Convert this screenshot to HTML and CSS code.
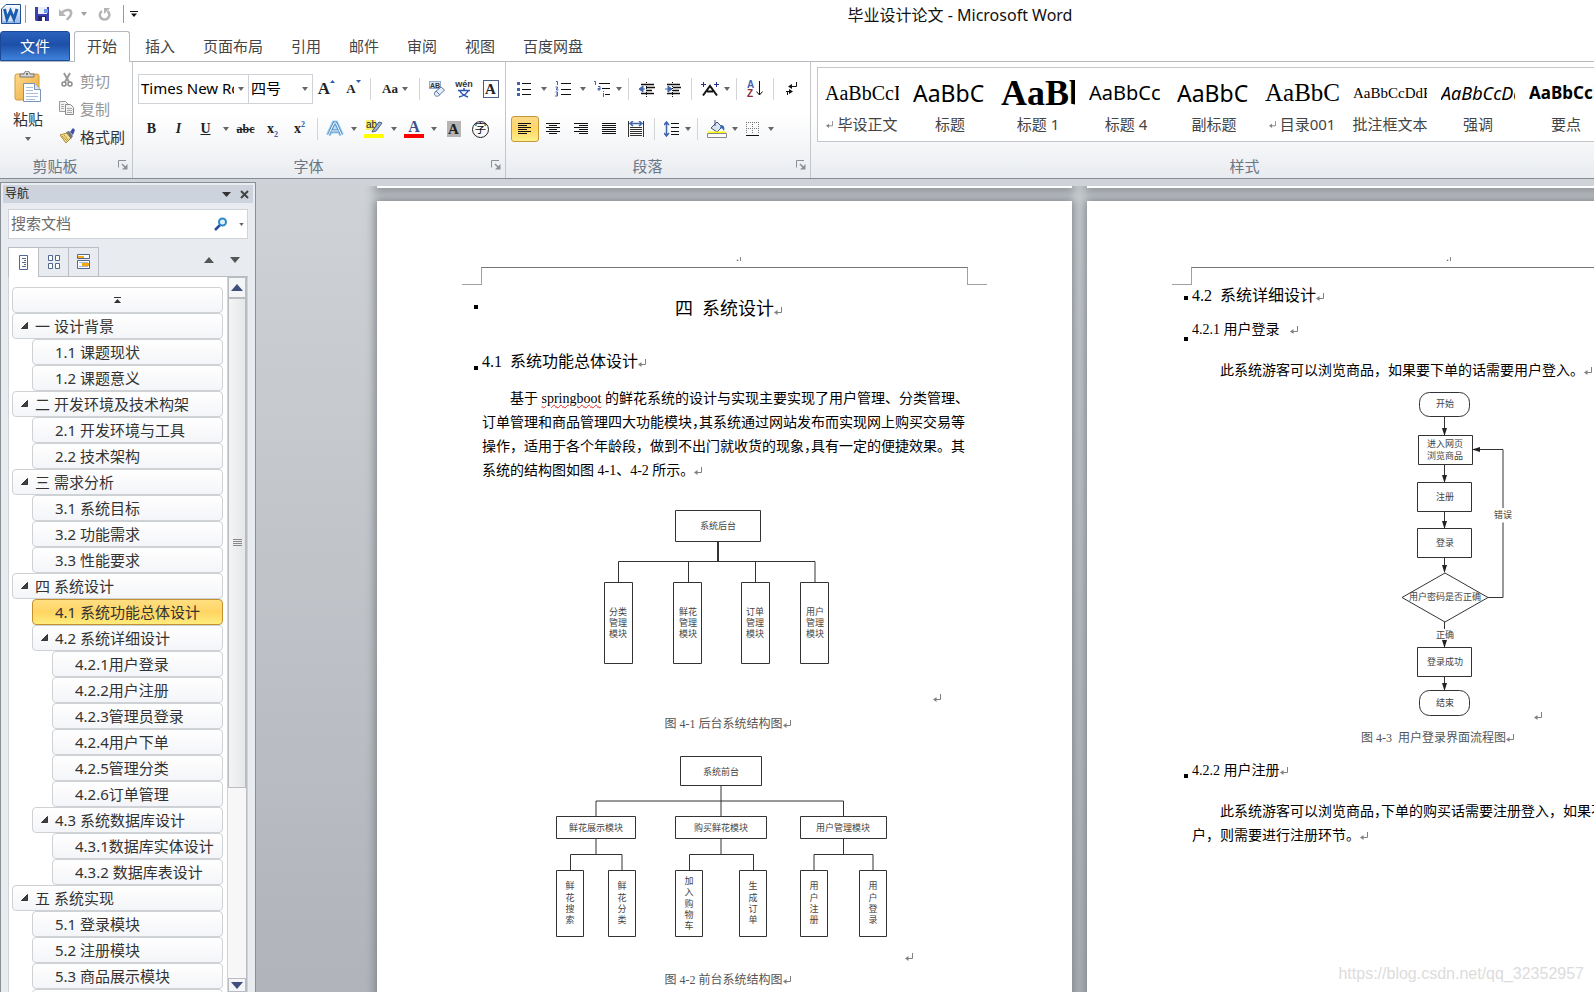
FILE: index.html
```html
<!DOCTYPE html>
<html lang="zh-CN">
<head>
<meta charset="utf-8">
<title>毕业设计论文 - Microsoft Word</title>
<link rel="stylesheet" href="styles.css">
</head>
<body>
<svg class="defs" aria-hidden="true">
  <defs>
    <symbol id="caret" viewBox="0 0 6 4"><path d="M0 0h6L3 4z" fill="#666"/></symbol>
    <symbol id="launch" viewBox="0 0 10 10"><path d="M.5 7.500V.5H8" fill="none" stroke="#8c9096"/><path d="M4 4l3 3" stroke="#8c9096" stroke-width="1.500"/><path d="M9.500 4v5.500H4z" fill="#8c9096"/></symbol>
    <symbol id="mark" viewBox="0 0 8 8"><path d="M7.500 0v5.500H2" fill="none" stroke="#808080"/><path d="M0 5.500L3.500 3v5z" fill="#808080"/></symbol>
    <symbol id="fold" viewBox="0 0 8 8"><path d="M7.500.5v7H.5z" fill="#404040" stroke="#222"/></symbol>
    <marker id="head" viewBox="0 0 8 5" refX="7" refY="2.500" markerWidth="8" markerHeight="5" markerUnits="userSpaceOnUse" orient="auto"><path d="M0 0l8 2.500L0 5z" fill="#222"/></marker>
    <linearGradient id="gold" x1="0" y1="0" x2="1" y2="1"><stop offset="0" stop-color="#ffd98a"/><stop offset="1" stop-color="#e9a93c"/></linearGradient>
    <linearGradient id="blue" x1="0" y1="0" x2="0" y2="1"><stop offset="0" stop-color="#fff"/><stop offset="1" stop-color="#8fb6e6"/></linearGradient>
  </defs>
</svg>
<div class="app">
  <header class="titlebar">
    <div class="quick">
      <svg class="logo" width="20" height="20" viewBox="0 0 20 20"><path d="M5 .5h14.500v19H.5V5z" fill="url(#blue)" stroke="#1f4f94"/><path d="M2 6h13v11H2z" fill="#fff" opacity=".5"/><path d="M3.500 5l2.500 10L9.500 7l3.500 8L16 5" fill="none" stroke="#1c5cae" stroke-width="3"/></svg>
      <i class="qsep"></i>
      <button class="qbtn save" aria-label="保存"><svg width="14" height="14" viewBox="0 0 14 14"><path d="M0 0h14v14H1l-1-1z" fill="#3b3fb0"/><path d="M3 0h9v7H3z" fill="#e9f0fb"/><path d="M9 2h4v4H9z" fill="#6d9be8"/><path d="M3 9h8v5H3z" fill="#23256e"/><path d="M7 10h3v4H7z" fill="#fff"/></svg></button>
      <button class="qbtn undo" aria-label="撤消"><svg width="14" height="13" viewBox="0 0 14 13"><path d="M3 4.500C8 0 13 2 12 6c-.5 3-3 4-4 6" fill="none" stroke="#b5b5b5" stroke-width="2.500"/><path d="M0 1v7h7z" fill="#b5b5b5"/></svg></button>
      <button class="qbtn undo-more" aria-label="撤消列表"><svg width="6" height="4" opacity=".6"><use href="#caret"/></svg></button>
      <button class="qbtn redo" aria-label="重复"><svg width="13" height="13" viewBox="0 0 13 13"><path d="M4 3C0 6 2 11.500 6.500 11.500S13 6 9.500 3" fill="none" stroke="#b5b5b5" stroke-width="2.500"/><path d="M6 0v6l6-6z" fill="#b5b5b5"/></svg></button>
      <i class="qsep"></i>
      <button class="qbtn custom" aria-label="自定义快速访问工具栏"><svg width="8" height="6" viewBox="0 0 8 6"><path d="M0 0h8v1H0zM1 2.500h6L4 6z" fill="#111"/></svg></button>
    </div>
    <h1 class="title">毕业设计论文 - Microsoft Word</h1>
  </header>
  <nav class="tabs">
    <button class="tab file">文件</button>
    <button class="tab current">开始</button>
    <button class="tab">插入</button>
    <button class="tab">页面布局</button>
    <button class="tab">引用</button>
    <button class="tab">邮件</button>
    <button class="tab">审阅</button>
    <button class="tab">视图</button>
    <button class="tab">百度网盘</button>
  </nav>
  <section class="ribbon">
    <div class="group clipboard">
      <div class="clip-body">
        <button class="paste">
          <svg width="28" height="32" viewBox="0 0 28 32"><rect x="1" y="3" width="24" height="26" rx="2" fill="url(#gold)" stroke="#d09a3e"/><path d="M6 6V3h4c0-4 6-4 6 0h4v3z" fill="#d6d6d6" stroke="#777"/><circle cx="13" cy="3" r="1" fill="#555"/><path d="M9.500 12.500h11l6 6v12h-17z" fill="#fff" stroke="#7a93b8"/><path d="M20.500 12.500v6h6" fill="#dbe6f5" stroke="#7a93b8"/><path d="M12 16.500h7M12 19.500h7M12 22.500h12M12 25.500h12M12 28.500h9" stroke="#a9bedc"/></svg>
          <span>粘贴</span>
          <svg width="6" height="4"><use href="#caret"/></svg>
        </button>
        <div class="clip-list">
          <button class="off"><svg width="16" height="16" viewBox="0 0 16 16"><path d="M5 1l5 9M11 1L6 10" stroke="#9a9a9a" stroke-width="2"/><circle cx="5" cy="12" r="2" fill="none" stroke="#8a8a8a" stroke-width="1.500"/><circle cx="11" cy="12" r="2" fill="none" stroke="#8a8a8a" stroke-width="1.500"/></svg>剪切</button>
          <button class="off"><svg width="16" height="16" viewBox="0 0 16 16"><path d="M.5 1.500h6l3 3v7h-9z" fill="#f2f2f2" stroke="#9a9a9a"/><path d="M6.500 4.500h5l3 3v7h-8z" fill="#f2f2f2" stroke="#8a8a8a"/><path d="M2 4.500h3M2 6.500h3M2 8.500h3M8 8.500h5M8 10.500h5M8 12.500h5" stroke="#aaa"/></svg>复制</button>
          <button><svg width="16" height="16" viewBox="0 0 16 16"><path d="M1 7l7-2 4 5-5 5z" fill="#f3dc8a" stroke="#a98b33"/><path d="M3 8l5 5M5 7l4 5" stroke="#b99b48"/><path d="M7 4l3-1 4 5-2 3z" fill="#777"/><path d="M11 4l3-4 2 2-2 5z" fill="#3f4ea8"/></svg>格式刷</button>
        </div>
      </div>
      <div class="group-name"><span>剪贴板</span><button class="launch" aria-label="剪贴板选项"><svg width="10" height="10"><use href="#launch"/></svg></button></div>
    </div>
    <div class="group font">
      <div class="row first">
        <label class="combo family"><select aria-label="字体"><option>Times New Roman</option></select><svg width="6" height="4"><use href="#caret"/></svg></label>
        <label class="combo size"><select aria-label="字号"><option>四号</option></select><svg width="6" height="4"><use href="#caret"/></svg></label>
        <button class="tool" aria-label="增大字体"><span class="glyph g17">A</span><svg class="up" width="5" height="4" viewBox="0 0 5 4"><path d="M0 3l2.500-3L5 3z" fill="#2f5ba8"/></svg></button>
        <button class="tool" aria-label="缩小字体"><span class="glyph g13">A</span><svg class="up" width="5" height="4" viewBox="0 0 5 4"><path d="M0 0h5L2.500 3z" fill="#2f5ba8"/></svg></button>
        <i class="sep"></i>
        <button class="tool wide" aria-label="更改大小写"><span class="glyph g13">Aa</span><svg width="6" height="4"><use href="#caret"/></svg></button>
        <i class="sep"></i>
        <button class="tool" aria-label="清除格式"><svg width="16" height="17" viewBox="0 0 16 17"><rect x=".5" y=".5" width="11" height="7" fill="#dce8f7" stroke="#8fa9cf"/><text x="1" y="7" class="tiny-b">AB</text><path d="M6 11l6-5 3.500 3-6 6c-3 1-5-1-3.500-4z" fill="#e6eefa" stroke="#5c79a8"/><path d="M7 10l4 4" stroke="#5c79a8"/></svg></button>
        <button class="tool" aria-label="拼音指南"><svg width="18" height="18" viewBox="0 0 18 18"><text x="9" y="7" text-anchor="middle" class="pinyin">wén</text><path d="M3 10.500h12M9 8v2M5 11c2 4 5 5 8 6M13 11c-2 4-5 5-9 6" fill="none" stroke="#2f55b5" stroke-width="1.500"/></svg></button>
        <button class="tool" aria-label="字符边框"><span class="glyph g15 boxed">A</span></button>
      </div>
      <div class="row second">
        <button class="tool" aria-label="加粗"><b class="glyph g14">B</b></button>
        <button class="tool" aria-label="倾斜"><i class="glyph g14">I</i></button>
        <button class="tool" aria-label="下划线"><span class="glyph g14 under">U</span></button>
        <button class="drop" aria-label="下划线样式"><svg width="6" height="4"><use href="#caret"/></svg></button>
        <button class="tool" aria-label="删除线"><span class="glyph g12 strike">abc</span></button>
        <button class="tool" aria-label="下标"><span class="glyph g14">x<sub>2</sub></span></button>
        <button class="tool" aria-label="上标"><span class="glyph g14">x<sup>2</sup></span></button>
        <i class="sep"></i>
        <button class="tool slim" aria-label="文本效果"><svg width="18" height="18" viewBox="0 0 18 18"><path d="M2.500 15L8 3h2l5.500 12M5.500 11h7" fill="none" stroke="#9fd0f5" stroke-width="5"/><path d="M2.500 15L8 3h2l5.500 12M5.500 11h7" fill="none" stroke="#5a93c8" stroke-width="3"/><path d="M2.500 15L8 3h2l5.500 12M5.500 11h7" fill="none" stroke="#fff"/></svg></button>
        <button class="drop" aria-label="文本效果列表"><svg width="6" height="4"><use href="#caret"/></svg></button>
        <button class="tool" aria-label="突出显示"><svg width="20" height="18" viewBox="0 0 20 18"><path d="M2 0h10v10H2z" fill="#f5f06a"/><text x="2" y="8" class="small">ab</text><path d="M9 10l6-8 3 1-6 8-4 1z" fill="#9fb6d6" stroke="#445b80"/><path d="M0 14h20v4H0z" fill="#ff0"/></svg></button>
        <button class="drop" aria-label="突出显示颜色"><svg width="6" height="4"><use href="#caret"/></svg></button>
        <button class="tool" aria-label="字体颜色"><svg width="20" height="18" viewBox="0 0 20 18"><text x="10" y="12" text-anchor="middle" class="color-a">A</text><path d="M0 14h20v4H0z" fill="#f00"/></svg></button>
        <button class="drop" aria-label="字体颜色列表"><svg width="6" height="4"><use href="#caret"/></svg></button>
        <button class="tool" aria-label="字符底纹"><span class="glyph g15 shaded">A</span></button>
        <button class="tool" aria-label="带圈字符"><span class="ring">字</span></button>
      </div>
      <div class="group-name"><span>字体</span><button class="launch" aria-label="字体选项"><svg width="10" height="10"><use href="#launch"/></svg></button></div>
    </div>
    <div class="group paragraph">
      <div class="row first">
        <button class="tool" aria-label="项目符号"><svg width="14" height="14" viewBox="0 0 14 14"><path d="M5 1.500h9M5 7.500h9M5 12.500h9" stroke="#111"/><path d="M0 0h3v3H0zM0 6h3v3H0zM0 11h3v3H0z" fill="#3f64ad"/></svg></button>
        <button class="drop" aria-label="项目符号库"><svg width="6" height="4"><use href="#caret"/></svg></button>
        <button class="tool" aria-label="编号"><svg width="16" height="16" viewBox="0 0 16 16"><path d="M6 2.500h10M6 8.500h10M6 13.500h10" stroke="#111"/><path d="M1 .5h1.500V4M.5 6h2v1.500h-1V9h2M.5 11h2v4H0M1 13h1.500" fill="none" stroke="#3f64ad"/></svg></button>
        <button class="drop" aria-label="编号库"><svg width="6" height="4"><use href="#caret"/></svg></button>
        <button class="tool" aria-label="多级列表"><svg width="16" height="16" viewBox="0 0 16 16"><path d="M5 2.500h11M8 7.500h8M11 13.500h5" stroke="#111"/><path d="M0 .5h1.500V4M4 5.500h2V9H4V7.500h2M9.500 10v1M9.500 12v4" fill="none" stroke="#3f64ad"/></svg></button>
        <button class="drop near-drop" aria-label="多级列表库"><svg width="6" height="4"><use href="#caret"/></svg></button>
        <i class="sep"></i>
        <button class="tool" aria-label="减少缩进量"><svg width="16" height="15" viewBox="0 0 16 15"><path d="M2 2.500h13M7 5.500h9M7 8.500h6M2 11.500h13" stroke="#111" stroke-width="1.500"/><path d="M7.500 0v15" stroke="#111" stroke-dasharray="1 1"/><path d="M6 7H2M4 4L0 7l4 3z" stroke="#3f64ad" fill="#3f64ad"/></svg></button>
        <button class="tool" aria-label="增加缩进量"><svg width="16" height="15" viewBox="0 0 16 15"><path d="M2 2.500h13M8 5.500h8M8 8.500h6M2 11.500h13" stroke="#111" stroke-width="1.500"/><path d="M7.500 0v15" stroke="#111" stroke-dasharray="1 1"/><path d="M0 7h4M3 4l4 3-4 3z" stroke="#3f64ad" fill="#3f64ad"/></svg></button>
        <i class="sep"></i>
        <button class="tool" aria-label="中文版式"><svg width="18" height="15" viewBox="0 0 18 15"><path d="M2 13.500L9 4l7 9.500M6 9.500h6" fill="none" stroke="#111" stroke-width="2"/><path d="M0 2.500h5M2.500 0v5M13 2.500h5M15.500 0v5" stroke="#23308f"/></svg></button>
        <button class="drop near-drop" aria-label="中文版式列表"><svg width="6" height="4"><use href="#caret"/></svg></button>
        <i class="sep"></i>
        <button class="tool" aria-label="排序"><svg width="16" height="18" viewBox="0 0 16 18"><text x="0" y="8" class="sort-a">A</text><text x="0" y="17" class="sort-z">Z</text><path d="M12.500 1v14M9.500 11.500l3 3.500 3-3.500" fill="none" stroke="#111"/></svg></button>
        <i class="sep"></i>
        <button class="tool" aria-label="显示编辑标记"><svg width="12" height="14" viewBox="0 0 12 14"><path d="M10.500 0v4.500H5M0 9.500h5M1.500 9v4" fill="none" stroke="#111"/><path d="M2 4.500L6 2v5zM7 9.500L3 7v5z" fill="#111"/></svg></button>
      </div>
      <div class="row second">
        <button class="tool on" aria-label="左对齐"><svg width="14" height="12" viewBox="0 0 14 12"><path d="M0 .5h13M0 2.500h9M0 4.500h13M0 6.500h9M0 8.500h13M0 10.500h9" stroke="#111"/></svg></button>
        <button class="tool" aria-label="居中"><svg width="14" height="12" viewBox="0 0 14 12"><path d="M0 .5h14M3 2.500h8M0 4.500h14M3 6.500h8M0 8.500h14M3 10.500h8" stroke="#111"/></svg></button>
        <button class="tool" aria-label="右对齐"><svg width="14" height="12" viewBox="0 0 14 12"><path d="M0 .5h14M5 2.500h9M0 4.500h14M5 6.500h9M0 8.500h14M5 10.500h9" stroke="#111"/></svg></button>
        <button class="tool" aria-label="两端对齐"><svg width="14" height="12" viewBox="0 0 14 12"><path d="M0 .5h14M0 2.500h14M0 4.500h14M0 6.500h14M0 8.500h14M0 10.500h14" stroke="#111"/></svg></button>
        <button class="tool spread" aria-label="分散对齐"><svg width="16" height="16" viewBox="0 0 16 16"><path d="M.5 0v16M15.500 0v16M2 6.500h12M2 8.500h12M2 10.500h12M2 12.500h12M2 14.500h12" stroke="#333"/><path d="M3 2.500h10M5 0L2 2.500 5 5M11 0l3 2.500L11 5" fill="none" stroke="#3f64ad" stroke-width="1.500"/></svg></button>
        <i class="sep"></i>
        <button class="tool spacing" aria-label="行距"><svg width="16" height="16" viewBox="0 0 16 16"><path d="M7 2.500h8M7 6.500h8M7 10.500h8M7 13.500h8" stroke="#111"/><path d="M2.500 1v14M0 4l2.500-3L5 4M0 12l2.500 3L5 12" fill="none" stroke="#3f64ad" stroke-width="1.500"/></svg></button>
        <button class="drop near-drop" aria-label="行距列表"><svg width="6" height="4"><use href="#caret"/></svg></button>
        <i class="sep"></i>
        <button class="tool" aria-label="底纹"><svg width="20" height="18" viewBox="0 0 20 18"><path d="M4 8l6-6 5 5-5 5z" fill="#dbe4f2" stroke="#40557a"/><path d="M8 0v6" stroke="#40557a"/><path d="M14 5c3 0 4 3 3 6-1-2-2-3-4-3z" fill="#2f6ab5"/><path d="M1 12.500h18" stroke="#ff0" stroke-width="2"/><path d="M.5 13.500h19v4H.5z" fill="#fff" stroke="#888"/></svg></button>
        <button class="drop near-drop" aria-label="底纹颜色"><svg width="6" height="4"><use href="#caret"/></svg></button>
        <button class="tool" aria-label="框线"><svg width="14" height="14" viewBox="0 0 14 14"><path d="M.5 0v12M6.500 0v12M12.500 0v12M0 .5h13M0 6.500h13" stroke="#777" stroke-dasharray="1 1"/><path d="M0 13.500h13" stroke="#111"/></svg></button>
        <button class="drop near-drop" aria-label="框线列表"><svg width="6" height="4"><use href="#caret"/></svg></button>
      </div>
      <div class="group-name"><span>段落</span><button class="launch" aria-label="段落选项"><svg width="10" height="10"><use href="#launch"/></svg></button></div>
    </div>
    <div class="group styles">
      <div class="gallery">
        <button class="style"><span class="sample serif s20">AaBbCcDd</span><span class="style-name"><svg width="7" height="7"><use href="#mark"/></svg> 毕设正文</span></button>
        <button class="style"><span class="sample s22">AaBbC</span><span class="style-name">标题</span></button>
        <button class="style"><span class="sample serif heavy s34">AaBb</span><span class="style-name">标题 1</span></button>
        <button class="style"><span class="sample s20">AaBbCc</span><span class="style-name">标题 4</span></button>
        <button class="style"><span class="sample s22">AaBbC</span><span class="style-name">副标题</span></button>
        <button class="style"><span class="sample serif s24">AaBbCc</span><span class="style-name"><svg width="7" height="7"><use href="#mark"/></svg> 目录001</span></button>
        <button class="style"><span class="sample serif s15">AaBbCcDdEe</span><span class="style-name">批注框文本</span></button>
        <button class="style"><span class="sample slant s18">AaBbCcDd</span><span class="style-name">强调</span></button>
        <button class="style"><span class="sample heavy s17">AaBbCcDd</span><span class="style-name">要点</span></button>
      </div>
      <div class="group-name"><span>样式</span></div>
    </div>
  </section>
  <main class="work">
    <aside class="pane">
      <div class="pane-head"><h2>导航</h2>
        <button aria-label="任务窗格选项"><svg width="9" height="5" viewBox="0 0 9 5"><path d="M0 0h9L4.500 5z" fill="#333"/></svg></button>
        <button aria-label="关闭"><svg width="9" height="9" viewBox="0 0 9 9"><path d="M1 1l7 7M8 1L1 8" stroke="#444" stroke-width="2"/></svg></button>
      </div>
      <div class="search">
        <input type="text" placeholder="搜索文档" aria-label="搜索文档">
        <button aria-label="搜索"><svg width="14" height="14" viewBox="0 0 14 14"><path d="M1 13l5-5" stroke="#2b4da0" stroke-width="2.500"/><circle cx="8.500" cy="5" r="3.500" fill="#dff1fb" stroke="#2f87c4" stroke-width="2"/></svg></button>
        <button class="search-more" aria-label="搜索选项"><svg width="5" height="3"><use href="#caret"/></svg></button>
      </div>
      <div class="views">
        <button class="view now" aria-label="浏览标题"><svg width="10" height="16" viewBox="0 0 10 16"><path d="M.5.5h8v14h-8z" fill="#fff" stroke="#51698f"/><path d="M3 3.500h4M5 5.500h2M3 7.500h4M5 9.500h2M3 11.500h4" stroke="#51698f"/></svg></button>
        <button class="view" aria-label="浏览页面"><svg width="12" height="15" viewBox="0 0 12 15"><path d="M.5.5h4v5h-4zM7.500.5h4v5h-4zM.5 8.500h4v5h-4zM7.500 8.500h4v5h-4z" fill="#fff" stroke="#51698f"/></svg></button>
        <button class="view" aria-label="浏览搜索结果"><svg width="14" height="16" viewBox="0 0 14 16"><path d="M.5.5h12v4H.5zM.5 6.500h12v8H.5z" fill="#fff" stroke="#51698f"/><path d="M1 2h6v2H1zM5 9h7v3H5z" fill="#f2a91c"/><path d="M2 8.500h9M2 12.500h9" stroke="#a9b6cc"/></svg></button>
        <span class="grow"></span>
        <button class="step" aria-label="上一标题"><svg width="10" height="6" viewBox="0 0 10 6"><path d="M0 6l5-6 5 6z" fill="#555"/></svg></button>
        <button class="step" aria-label="下一标题"><svg width="10" height="6" viewBox="0 0 10 6"><path d="M0 0h10L5 6z" fill="#555"/></svg></button>
      </div>
      <div class="outline">
        <ul class="tree">
          <li class="l1"><button class="top" aria-label="跳至开头"><svg width="7" height="7" viewBox="0 0 7 7"><path d="M0 .5h7" stroke="#333"/><path d="M0 6l3.500-4L7 6z" fill="#333"/></svg></button></li>
          <li class="l1"><button><svg><use href="#fold"/></svg>一 设计背景</button></li>
          <li class="l2"><button>1.1 课题现状</button></li>
          <li class="l2"><button>1.2 课题意义</button></li>
          <li class="l1"><button><svg><use href="#fold"/></svg>二 开发环境及技术构架</button></li>
          <li class="l2"><button>2.1 开发环境与工具</button></li>
          <li class="l2"><button>2.2 技术架构</button></li>
          <li class="l1"><button><svg><use href="#fold"/></svg>三 需求分析</button></li>
          <li class="l2"><button>3.1 系统目标</button></li>
          <li class="l2"><button>3.2 功能需求</button></li>
          <li class="l2"><button>3.3 性能要求</button></li>
          <li class="l1"><button><svg><use href="#fold"/></svg>四 系统设计</button></li>
          <li class="l2"><button class="picked">4.1 系统功能总体设计</button></li>
          <li class="l2"><button><svg><use href="#fold"/></svg>4.2 系统详细设计</button></li>
          <li class="l3"><button>4.2.1用户登录</button></li>
          <li class="l3"><button>4.2.2用户注册</button></li>
          <li class="l3"><button>4.2.3管理员登录</button></li>
          <li class="l3"><button>4.2.4用户下单</button></li>
          <li class="l3"><button>4.2.5管理分类</button></li>
          <li class="l3"><button>4.2.6订单管理</button></li>
          <li class="l2"><button><svg><use href="#fold"/></svg>4.3 系统数据库设计</button></li>
          <li class="l3"><button>4.3.1数据库实体设计</button></li>
          <li class="l3"><button>4.3.2 数据库表设计</button></li>
          <li class="l1"><button><svg><use href="#fold"/></svg>五 系统实现</button></li>
          <li class="l2"><button>5.1 登录模块</button></li>
          <li class="l2"><button>5.2 注册模块</button></li>
          <li class="l2"><button>5.3 商品展示模块</button></li>
          <li class="l2"><button></button></li>
        </ul>
        <div class="scroll">
          <button aria-label="向上滚动"><svg width="12" height="7" viewBox="0 0 12 7"><path d="M0 7l6-7 6 7z" fill="#3f4f7d"/></svg></button>
          <div class="track"><div class="thumb"><svg width="9" height="8" viewBox="0 0 9 8"><path d="M0 .5h9M0 2.500h9M0 4.500h9M0 6.500h9" stroke="#888"/></svg></div></div>
          <button class="down" aria-label="向下滚动"><svg width="12" height="7" viewBox="0 0 12 7"><path d="M0 0h12L6 7z" fill="#3f4f7d"/></svg></button>
        </div>
      </div>
    </aside>
    <div class="desk">
      <div class="column">
        <div class="prev"></div>
        <article class="page">
          <div class="page-top">.<i></i></div>
          <div class="corners"></div>
          <h2 class="chapter dot">四&nbsp; 系统设计<svg class="mk"><use href="#mark"/></svg></h2>
          <h3 class="section far dot low">4.1&nbsp; 系统功能总体设计<svg class="mk"><use href="#mark"/></svg></h3>
          <p class="text first-text">
            <span class="line indent">基于 <span class="spell">springboot</span> 的鲜花系统的设计与实现主要实现了用户管理、分类管理、</span>
            <span class="line">订单管理和商品管理四大功能模块<span class="tight">，</span>其系统通过网站发布而实现网上购买交易等</span>
            <span class="line">操作，适用于各个年龄段，做到不出门就收货的现象<span class="tight">，</span>具有一定的便捷效果。其</span>
            <span class="line">系统的结构图如图 4-1、4-2 所示。<svg class="mk"><use href="#mark"/></svg></span>
          </p>
          <svg class="figure" viewBox="482 483 485 229" width="485" height="229">
            <g class="ln"><path d="M675.500 510.500h85v31h-85zM618.500 582v-20.500h196.500v20.500M688.500 561v21M755.500 561v21"/><path d="M718 541v20" stroke-width="2"/><path d="M604.500 582.500h28v81h-28zM673.500 582.500h28v81h-28zM741.500 582.500h28v81h-28zM800.500 582.500h28v81h-28z"/></g>
            <g class="tx"><text x="718" y="529">系统后台</text>
            <text y="615"><tspan x="618">分类</tspan><tspan x="618" dy="11">管理</tspan><tspan x="618" dy="11">模块</tspan></text>
            <text y="615"><tspan x="688">鲜花</tspan><tspan x="688" dy="11">管理</tspan><tspan x="688" dy="11">模块</tspan></text>
            <text y="615"><tspan x="755">订单</tspan><tspan x="755" dy="11">管理</tspan><tspan x="755" dy="11">模块</tspan></text>
            <text y="615"><tspan x="815">用户</tspan><tspan x="815" dy="11">管理</tspan><tspan x="815" dy="11">模块</tspan></text></g>
            <use href="#mark" x="933" y="694" width="8" height="8"/>
          </svg>
          <p class="caption">图 4-1 后台系统结构图<svg class="mk"><use href="#mark"/></svg></p>
          <svg class="figure" viewBox="482 736 485 232" width="485" height="232">
            <g class="ln"><path d="M680.500 756.500h81v29h-81zM721 785.500v31M596 816.500v-15.500h247.500v15.500"/><path d="M556.500 816.500h79v22h-79zM675.500 816.500h91v22h-91zM800.500 816.500h86v22h-86z"/><path d="M596 838.500v16M570.500 870v-15.500h51.500v15.500M721 838.500v16M689.500 870v-15.500h64v15.500M843.500 838.500v16M814 870v-15.500h59v15.500"/><path d="M556.500 870.500h27v66h-27zM608.500 870.500h27v66h-27zM675.500 870.500h27v66h-27zM739.500 870.500h27v66h-27zM800.500 870.500h27v66h-27zM859.500 870.500h27v66h-27z"/></g>
            <g class="tx"><text x="721" y="775">系统前台</text><text x="596" y="831">鲜花展示模块</text><text x="721" y="831">购买鲜花模块</text><text x="843" y="831">用户管理模块</text>
            <text y="889"><tspan x="570">鲜</tspan><tspan x="570" dy="12">花</tspan><tspan x="570" dy="11">搜</tspan><tspan x="570" dy="11">索</tspan></text>
            <text y="889"><tspan x="622">鲜</tspan><tspan x="622" dy="12">花</tspan><tspan x="622" dy="11">分</tspan><tspan x="622" dy="11">类</tspan></text>
            <text y="884"><tspan x="689">加</tspan><tspan x="689" dy="11">入</tspan><tspan x="689" dy="12">购</tspan><tspan x="689" dy="11">物</tspan><tspan x="689" dy="11">车</tspan></text>
            <text y="889"><tspan x="753">生</tspan><tspan x="753" dy="12">成</tspan><tspan x="753" dy="11">订</tspan><tspan x="753" dy="11">单</tspan></text>
            <text y="889"><tspan x="814">用</tspan><tspan x="814" dy="12">户</tspan><tspan x="814" dy="11">注</tspan><tspan x="814" dy="11">册</tspan></text>
            <text y="889"><tspan x="873">用</tspan><tspan x="873" dy="12">户</tspan><tspan x="873" dy="11">登</tspan><tspan x="873" dy="11">录</tspan></text></g>
            <use href="#mark" x="905" y="953" width="8" height="8"/>
          </svg>
          <p class="caption">图 4-2 前台系统结构图<svg class="mk"><use href="#mark"/></svg></p>
        </article>
      </div>
      <div class="column">
        <div class="prev"></div>
        <article class="page">
          <div class="page-top">.<i></i></div>
          <div class="corners"></div>
          <h3 class="section dot">4.2&nbsp; 系统详细设计<svg class="mk"><use href="#mark"/></svg></h3>
          <h4 class="sub dot lower">4.2.1 用户登录&nbsp;&nbsp; <svg class="mk"><use href="#mark"/></svg></h4>
          <p class="text"><span class="line indent">此系统游客可以浏览商品，如果要下单的话需要用户登入。<svg class="mk"><use href="#mark"/></svg></span></p>
          <svg class="figure" viewBox="1192 383 485 343" width="485" height="343">
            <g class="ln"><rect x="1419.500" y="392.500" width="50" height="24" rx="10"/><path d="M1418.500 435.500h54v29h-54zM1417.500 482.500h54v29h-54zM1417.500 528.500h54v29h-54zM1417.500 647.500h54v29h-54z"/><path d="M1445 573l43 24.500-43 24.500-43-24.500z"/><rect x="1419.500" y="690.500" width="50" height="25" rx="10"/>
            <path d="M1444.500 622v7M1488 597.500h15v-75"/>
            <g marker-end="url(#head)"><path d="M1444.500 417v18"/><path d="M1444.500 465v17"/><path d="M1444.500 512v16"/><path d="M1444.500 558v14"/><path d="M1444.500 640v7"/><path d="M1444.500 677v13"/><path d="M1503 508v-58.500h-30"/></g></g>
            <g class="tx"><text x="1445" y="407">开始</text><text x="1445" y="447">进入网页</text><text x="1445" y="459">浏览商品</text><text x="1445" y="500">注册</text><text x="1445" y="546">登录</text><text x="1445" y="600">用户密码是否正确</text><text x="1503" y="518">错误</text><text x="1445" y="638">正确</text><text x="1445" y="665">登录成功</text><text x="1445" y="706">结束</text></g>
            <use href="#mark" x="1534" y="712" width="8" height="8"/>
          </svg>
          <p class="caption">图 4-3&nbsp; 用户登录界面流程图<svg class="mk"><use href="#mark"/></svg></p>
          <h4 class="sub near dot low">4.2.2 用户注册<svg class="mk"><use href="#mark"/></svg></h4>
          <p class="text"><span class="line indent">此系统游客可以浏览商品<span class="tight">，</span>下单的购买话需要注册登入，如果不是注册用</span>
            <span class="line">户，则需要进行注册环节。<svg class="mk"><use href="#mark"/></svg></span></p>
        </article>
      </div>
      <div class="watermark">https://blog.csdn.net/qq_32352957</div>
    </div>
  </main>
</div>
</body>
</html>
```

FILE: styles.css
```css
* { box-sizing: border-box; }
body { margin: 0; font-family: "Noto Sans", "Noto Sans CJK SC", sans-serif; font-size: 15px; color: #333; }
button { border: 0; padding: 0; background: none; font: inherit; color: inherit; display: flex; align-items: center; justify-content: center; }
h1, h2, h3, h4, p, ul { margin: 0; padding: 0; font-weight: 400; }
svg { flex: none; display: block; }
.defs { position: absolute; width: 0; height: 0; }
.app { height: 100vh; display: flex; flex-direction: column; overflow: hidden; background: #fff; }

/* title bar */
.titlebar { display: grid; grid-template-columns: 140px 1fr; height: 30px; align-items: center; }
.quick { display: flex; align-items: center; height: 26px; padding: 0 0 2px 1px; }
.qsep { width: 1px; height: 18px; background: #999; margin: 0 4px; }
.qbtn { height: 20px; }
.save { width: 24px; }
.undo { width: 27px; }
.undo-more { width: 10px; }
.redo { width: 31px; }
.custom { width: 12px; }
.title { font-size: 16px; line-height: 30px; text-align: center; padding-left: 186px; color: #111; white-space: nowrap; }

/* tabs */
.tabs { display: flex; height: 32px; border-bottom: 1px solid #b6babf; padding-top: 1px; flex: none; }
.tab { padding: 0 14px 2px; height: 30px; color: #444; white-space: nowrap; }
.file { width: 70px; margin-right: 4px; color: #fff; background: linear-gradient(#2a62bd, #1d4fa8 45%, #3f83dc); border: 1px solid #1c4a98; border-radius: 3px 3px 0 0; }
.current { width: 56px; padding: 0 0 3px; height: 31px; margin-right: 1px; background: #fff; border: 1px solid #b6babf; border-bottom: 0; border-radius: 3px 3px 0 0; position: relative; z-index: 1; }

/* ribbon */
.ribbon { display: flex; height: 117px; flex: none; background: linear-gradient(#fff 45%, #f4f5f7 75%, #e8ebef); border-bottom: 1px solid #868b91; }
.group { display: flex; flex-direction: column; border-right: 1px solid #c3c6ca; flex: none; }
.clipboard { width: 133px; }
.font { width: 373px; padding-left: 5px; }
.paragraph { width: 305px; padding-left: 5px; }
.styles { flex: 1; min-width: 0; border: 0; overflow: hidden; padding-left: 6px; }
.group-name { margin-top: auto; height: 24px; display: flex; align-items: center; color: #6a7585; margin-bottom: 1px; }
.group-name span { flex: 1; text-align: center; padding-right: 12px; }
.launch { width: 10px; height: 10px; margin-right: 4px; }
.clipboard .group-name span { padding-right: 8px; }
.styles .group-name { padding-left: 90px; }
.clip-body { display: flex; padding-top: 4px; }
.paste { width: 56px; flex-direction: column; height: 80px; justify-content: flex-start; padding-top: 5px; }
.paste span { line-height: 24px; margin: 4px 0 6px; }
.clip-list { display: flex; flex-direction: column; }
.clip-list button { height: 28px; gap: 5px; justify-content: flex-start; padding-left: 3px; }
.off { color: #969696; }
.row { display: flex; align-items: center; height: 30px; }
.first { margin-top: 12px; }
.second { margin-top: 10px; }
.combo { display: flex; align-items: center; height: 30px; border: 1px solid #cfd2d6; background: #fff; }
.combo select { appearance: none; border: 0; background: none; font: inherit; color: #000; padding: 0 0 2px 2px; height: 28px; flex: 1; min-width: 0; overflow: hidden; outline: 0; }
.combo svg { margin: 0 4px; }
.family { width: 111px; margin-right: -1px; }
.size { width: 65px; }
.tool { width: 27px; height: 26px; flex: none; gap: 4px; }
.wide { width: 40px; margin: 0 1px; }
.slim { width: 24px; }
.drop { width: 13px; height: 26px; flex: none; }
.near-drop { width: 8px; }
.sep { width: 1px; height: 22px; background: #d3d5d8; margin: 0 3px; flex: none; }
.font .second .sep { margin: 0 5px 0 4px; }
.glyph { font-family: "Liberation Serif", serif; font-weight: 700; color: #222; line-height: 16px; }
.g17 { font-size: 17px; }
.g15 { font-size: 15px; }
.g14 { font-size: 14px; }
.g13 { font-size: 13px; }
.g12 { font-size: 12px; }
.tool .up { align-self: flex-start; margin: 4px 0 0 -4px; }
.boxed { border: 1px solid #4a5f86; width: 16px; }
.shaded { background: #b5b5b5; width: 14px; }
.under { text-decoration: underline; }
.strike { text-decoration: line-through; }
.glyph sub, .glyph sup { font-size: 8px; line-height: 0; color: #2f5ba8; }
.ring { width: 17px; height: 17px; border: 1px solid #222; border-radius: 50%; font-size: 12px; line-height: 14px; text-align: center; color: #111; }
.tiny-b { font: 700 7px "Liberation Sans", sans-serif; fill: #333; }
.small { font: 10px "Liberation Sans", sans-serif; fill: #222; }
.pinyin { font: 700 9px "Liberation Sans", sans-serif; fill: #333; }
.color-a { font: 700 16px "Liberation Serif", serif; fill: #36508f; }
.sort-a { font: 700 10px "Liberation Sans", sans-serif; fill: #3f64ad; }
.sort-z { font: 700 10px "Liberation Sans", sans-serif; fill: #8f3036; }
.paragraph .first .sep { margin: 0 5px; }
.paragraph .first .tool { width: 26px; }
.paragraph .tool.on { border: 1px solid #c4983c; border-radius: 3px; background: linear-gradient(#fdd98a, #ffd765 50%, #fff08a); }
.paragraph .second .tool { width: 28px; }
.paragraph .second .spread { width: 26px; }
.paragraph .second .spacing { width: 24px; }
.paragraph .second .sep { margin: 0 5px; }
.gallery { display: flex; height: 75px; margin-top: 5px; border: 1px solid #c3c6ca; border-right: 0; background: #fff; overflow: hidden; }
.style { width: 88px; flex: none; padding: 0 7px; flex-direction: column; justify-content: flex-start; }
.sample { width: 74px; height: 43px; line-height: 50px; overflow: hidden; white-space: nowrap; color: #000; text-align: left; }
.style-name { display: flex; gap: 4px; align-items: center; line-height: 26px; white-space: nowrap; color: #444; }
.serif { font-family: "Liberation Serif", serif; }
.heavy { font-weight: 700; }
.slant { font-style: italic; }
.s15 { font-size: 15px; }
.s17 { font-size: 17px; }
.s18 { font-size: 18px; }
.s20 { font-size: 20px; }
.s22 { font-size: 23px; }
.s24 { font-size: 25px; }
.s34 { font-size: 36px; }

/* workspace */
.work { flex: 1; min-height: 0; display: flex; background: linear-gradient(#cfd2d6, #b0b4ba); padding-top: 3px; }
.pane { width: 256px; flex: none; display: flex; flex-direction: column; border: 1px solid #8a8f96; border-bottom: 0; background: #e8ecf1; padding: 2px 2px 0; }
.pane-head { display: flex; align-items: center; height: 18px; background: #cdd3dc; padding: 0 4px 0 2px; gap: 9px; }
.pane-head h2 { flex: 1; font-size: 12px; line-height: 18px; color: #222; }
.search { display: flex; align-items: center; height: 30px; margin: 6px 5px 0; border: 1px solid #cfd2d6; background: #fff; }
.search input { flex: 1; min-width: 0; border: 0; outline: 0; font: inherit; padding: 0 2px 3px; background: none; }
.search input::placeholder { color: #6d6d6d; }
.search-more { width: 12px; margin-left: 7px; }
.views { display: flex; height: 30px; margin: 8px 5px 0; border-bottom: 1px solid #b9bdc3; align-items: flex-start; }
.view { width: 31px; height: 29px; border: 1px solid #b9bdc3; border-bottom: 0; margin-right: -1px; }
.view.now { background: #fff; height: 30px; }
.grow { flex: 1; }
.step { width: 26px; height: 25px; }
.outline { display: flex; flex: 1; min-height: 0; margin: 0 5px; background: #fff; border: 1px solid #cfd2d6; border-top: 0; border-bottom: 0; overflow: hidden; }
.tree { list-style: none; flex: 1; padding: 10px 4px 0 3px; }
.tree button { width: 100%; height: 26px; justify-content: flex-start; padding: 0 0 2px 22px; border: 1px solid #cfd2d5; border-radius: 4px; background: linear-gradient(#fff, #f4f5f8); white-space: nowrap; color: #333; }
.tree svg { width: 7px; height: 7px; margin: 0 7px 0 -14px; }
.tree .top { justify-content: center; padding: 0; }
.tree .top svg { margin: 0; }
.tree .picked { border-color: #c2912e; background: linear-gradient(#ffdf82, #ffd463 50%, #ffec7c); }
.l2 { padding-left: 20px; }
.l3 { padding-left: 40px; }
.scroll { width: 20px; display: flex; flex-direction: column; border-left: 1px solid #cfd2d6; border-right: 1px solid #b9bdc3; background: #f7f7f7; }
.scroll button { height: 21px; border: 1px solid #b9bdc3; background: #f4f5f6; }
.scroll .down { height: 14px; }
.track { flex: 1; }
.thumb { height: 72%; border: 1px solid #b9bdc3; background: linear-gradient(90deg, #f4f4f4, #e6e7e8); display: flex; align-items: center; justify-content: center; }

/* document */
.desk { flex: 1; min-width: 0; margin-top: 4px; position: relative; display: flex; gap: 15px; padding-left: 121px; overflow: hidden; }
.column { width: 695px; flex: none; }
.prev { height: 2px; background: #fff; margin-bottom: 13px; box-shadow: 0 1px 10px 3px #7d8388; }
.page { min-height: 100%; background: #fff; padding: 0 105px; box-shadow: 0 0 9px 2px #7d8388; color: #000; font-family: "Liberation Serif", "Noto Sans CJK SC", serif; position: relative; }
.page-top { height: 66px; padding: 51px 0 0 28px; text-align: center; font-size: 12px; line-height: 10px; color: #555; }
.page-top i { display: inline-block; width: 1px; height: 4px; background: #888; margin-left: 1px; }
.corners { height: 18px; margin: 0 -1px; border: 1px solid #a0a0a0; border-top-color: #777; border-bottom: 0; position: relative; }
.corners::before, .corners::after { content: ""; position: absolute; bottom: 0; width: 20px; height: 1px; background: #a0a0a0; }
.corners::before { right: 100%; }
.corners::after { left: 100%; }
.mk { display: inline-block; width: 8px; height: 8px; }
.dot { position: relative; }
.dot::before { content: ""; position: absolute; left: -8px; top: 11px; width: 4px; height: 4px; background: #000; }
.low::before { top: 15px; }
.lower::before { top: 19px; }
.chapter { font-size: 18px; line-height: 30px; margin-top: 9px; text-align: center; text-indent: 8px; }
.section { font-size: 16px; line-height: 22px; }
.far { margin-top: 27px; }
.sub { font-size: 14px; line-height: 24px; margin-top: 11px; }
.near { margin-top: 9px; }
.text { font-size: 14px; line-height: 24px; margin-top: 17px; }
.first-text { margin-top: 14px; }
.line { display: block; white-space: nowrap; }
.indent { padding-left: 28px; }
.tight { font-feature-settings: "halt"; }
.spell { text-decoration: underline wavy #e02020 1px; }
.figure { display: block; }
.ln { fill: none; stroke: #333; }
.tx { font: 9px "Noto Sans CJK SC", sans-serif; fill: #444; text-anchor: middle; }
.caption { font-size: 12px; line-height: 24px; text-align: center; color: #555; padding-left: 6px; }
.watermark { position: absolute; right: 10px; bottom: 7px; font: 16px/22px "Liberation Sans", sans-serif; color: #dcdcdc; }
```
